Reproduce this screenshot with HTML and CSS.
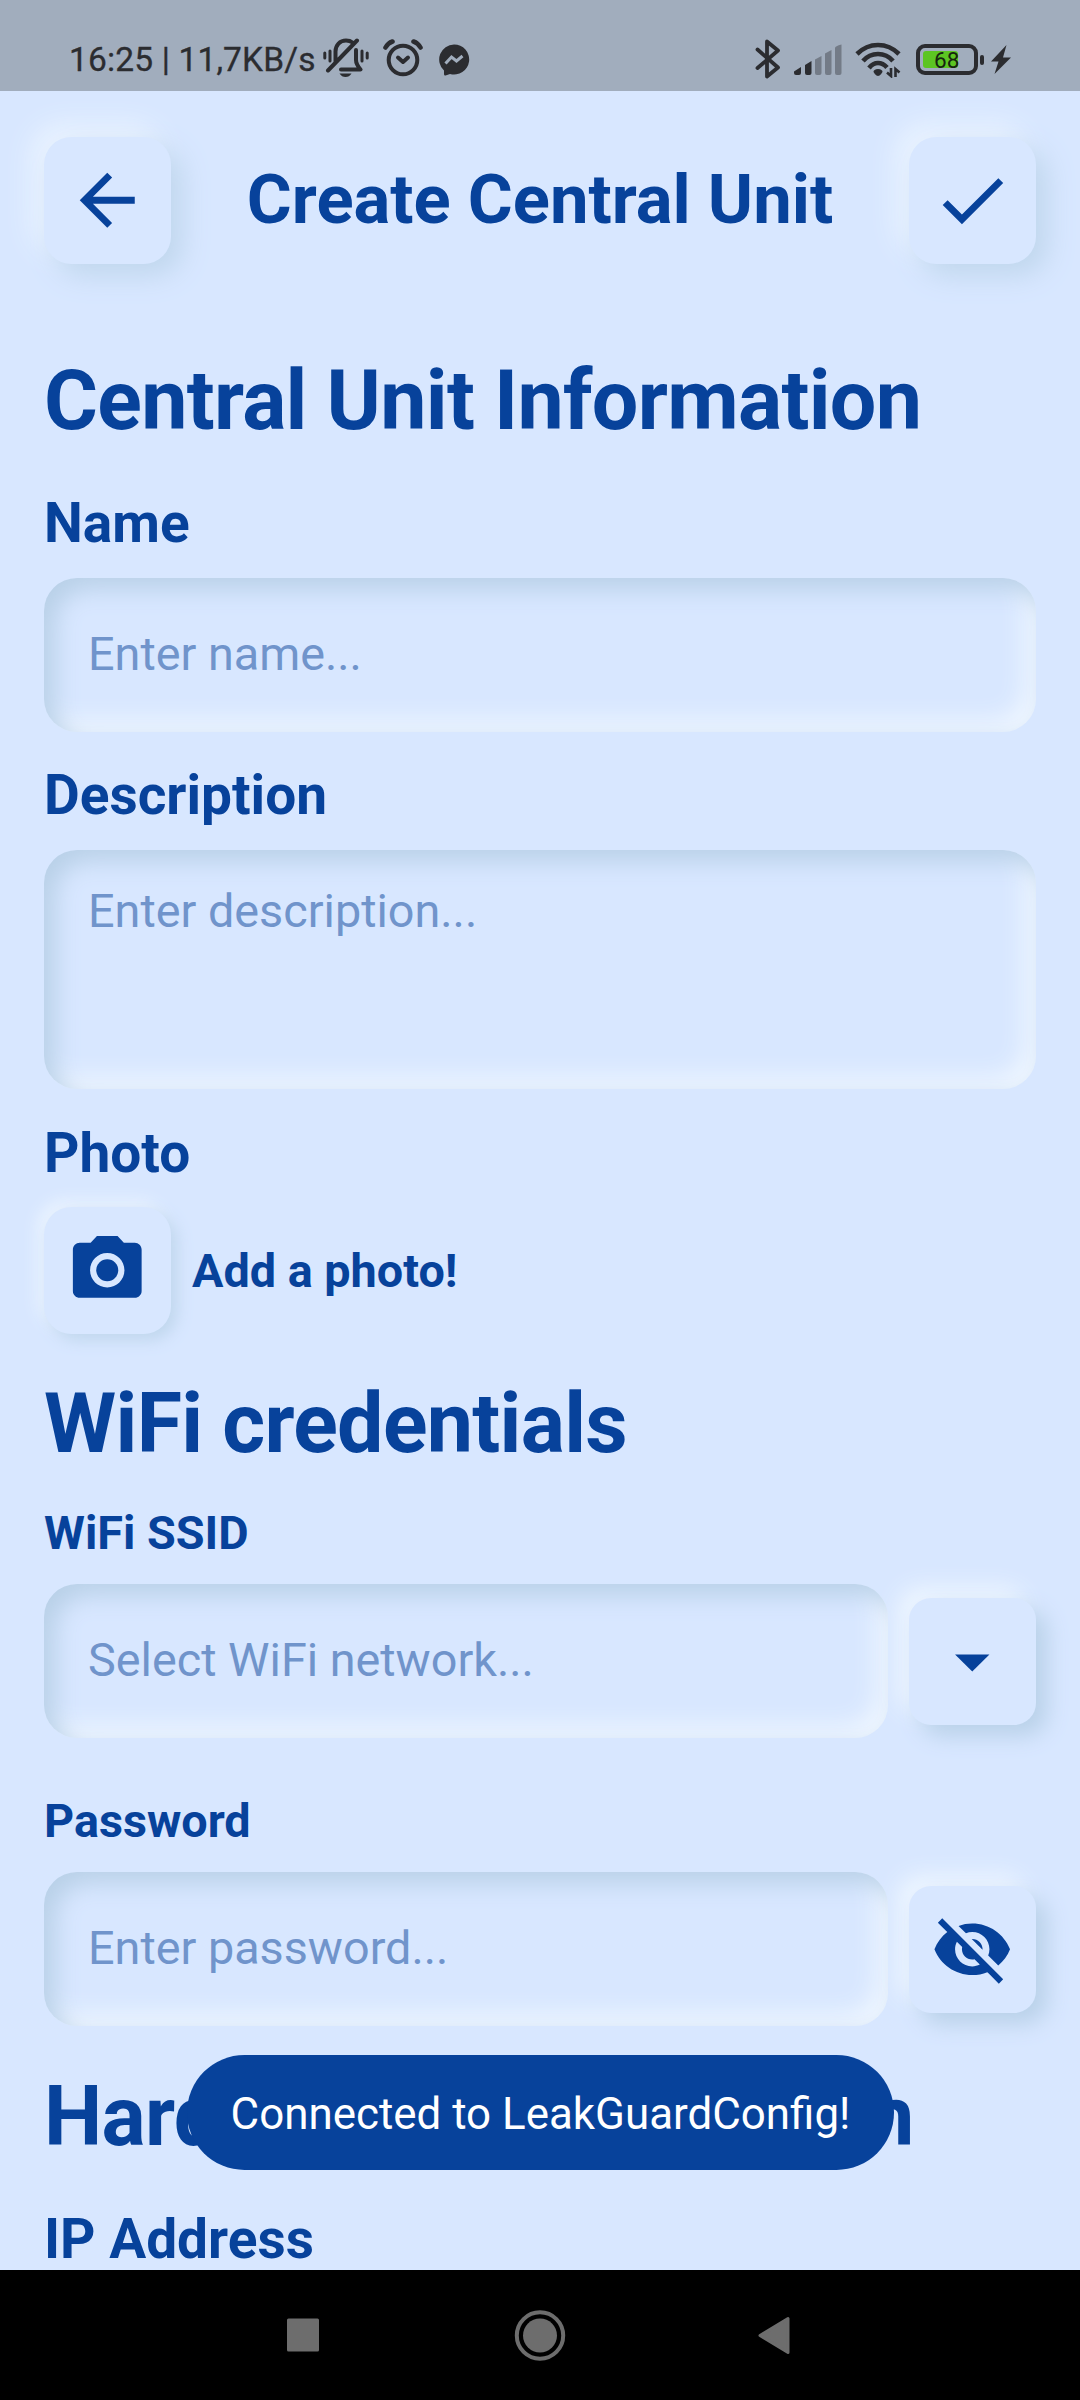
FILE: index.html
```html
<!DOCTYPE html>
<html lang="en">
<head>
<meta charset="utf-8">
<title>Create Central Unit</title>
<link rel="stylesheet" href="styles.css">
</head>
<body>
<div class="screen">
  <div class="status">
    <span class="clock">16:25 | 11,7KB/s</span>
    <svg class="icon-muted" width="46" height="40" viewBox="0 0 46 40" fill="none" stroke="currentColor" stroke-width="4" stroke-linecap="round">
      <path d="M12.5 24V13.500C12.500 7 17 2.500 23 2.500c3 0 5 .8 6.500 2M33 12v10c0 3 1.500 6 4.500 9.500H18M5 32.500L34 2.500" stroke-linejoin="round"/>
      <path d="M16.500 35.500h12c-1.500 2.500-3.500 3.500-6 3.500s-4.500-1-6-3.500z" fill="currentColor" stroke="none"/>
      <path d="M1.800 15v5M7 13v10M39 13v10M44.200 15v5" stroke-width="3"/>
    </svg>
    <svg class="icon-alarm" width="40" height="38" viewBox="0 0 40 38" fill="none" stroke="currentColor" stroke-width="4" stroke-linecap="round">
      <circle cx="20" cy="21" r="14.300"/>
      <path d="M15 18.500l5 4.500 5-4.500" stroke-linejoin="round"/>
      <path d="M2.500 8.500Q5 4 9.500 2.500M37.500 8.500Q35 4 30.500 2.500" stroke-width="4.600"/>
    </svg>
    <svg class="icon-messenger" width="32" height="32" viewBox="0 0 32 32">
      <path d="M16 .5a15 15 0 1 1-4 29.400L7.500 31.500Q6 31.800 6 30v-3.500A15 15 0 0 1 16 .5z" fill="currentColor"/>
      <path d="M7.500 19.500l6-6.500 5 4 6-5" fill="none" stroke="#a1adbd" stroke-width="3"/>
    </svg>
    <svg class="icon-bluetooth" width="26" height="40" viewBox="0 0 26 40" fill="none" stroke="currentColor" stroke-width="3.800" stroke-linejoin="round" stroke-linecap="round">
      <path d="M2.500 10.500L23 28.500 12 37.500v-35L23 11.500 2.500 29"/>
    </svg>
    <svg class="icon-signal" width="48" height="32" viewBox="0 0 48 32" fill="currentColor">
      <path d="M0 27.500L7 23v6q0 2-2 2H2q-2 0-2-2z"/>
      <path d="M11 21L17.500 17v12q0 2-2 2h-2.500q-2 0-2-2z"/>
      <g opacity=".38">
        <path d="M21 15.500L27.500 12v17q0 2-2 2h-2.500q-2 0-2-2z"/>
        <path d="M31 9.500L37.500 6v23q0 2-2 2h-2.500q-2 0-2-2z"/>
        <path d="M41 4Q41 2 47.500.500V29q0 2-2 2h-2.500q-2 0-2-2z"/>
      </g>
    </svg>
    <svg class="icon-wifi" width="47" height="36" viewBox="0 0 47 36" fill="none" stroke="currentColor" stroke-width="4.600">
      <path d="M2 12Q11 3 23 3t21 9M8 19Q14 12 23 12t15 7M14 26Q18 21 23 21t9 4.500"/>
      <path d="M23 27c3 0 4.500 1.500 4.500 2.500S25 34 23 34s-4.500-3.500-4.500-4.500S20 27 23 27z" fill="currentColor" stroke="none"/>
      <path d="M36 26v8l-4-3.500M40.500 35v-8l4 3.500" stroke-width="2.600"/>
    </svg>
    <span class="battery"><span class="battery-level"></span><span class="battery-text">68</span></span>
    <span class="battery-nub"></span>
    <svg class="icon-bolt" width="20" height="29" viewBox="0 0 20 29" fill="currentColor"><path d="M15.500 0L0 16.500h7.500L3.500 29 20 12.500h-8z"/></svg>
  </div>

  <header class="header">
    <button class="btn btn-soft">
      <svg width="82.5" height="82.5" viewBox="0 0 24 24" fill="currentColor"><path d="M20 11H7.830l5.590-5.590L12 4l-8 8 8 8 1.410-1.410L7.830 13H20v-2z"/></svg>
    </button>
    <h1 class="title">Create Central Unit</h1>
    <button class="btn btn-soft">
      <svg width="82.5" height="82.5" viewBox="0 0 24 24" fill="currentColor"><path d="M9 16.170L4.830 12l-1.420 1.410L9 19 21 7l-1.410-1.410z"/></svg>
    </button>
  </header>

  <main class="form">
    <section class="section">
      <h2 class="heading">Central Unit Information</h2>
      <div class="field">
        <span class="label">Name</span>
        <div class="input">Enter name...</div>
      </div>
      <div class="field">
        <span class="label">Description</span>
        <div class="input input-area">Enter description...</div>
      </div>
      <div class="field field-photo">
        <span class="label">Photo</span>
        <div class="row row-photo">
          <button class="btn btn-near">
            <svg width="82.5" height="82.5" viewBox="0 0 24 24" fill="currentColor"><circle cx="12" cy="12" r="3.200"/><path d="M9 2L7.170 4H4c-1.100 0-2 .9-2 2v12c0 1.100.9 2 2 2h16c1.100 0 2-.9 2-2V6c0-1.100-.9-2-2-2h-3.170L15 2H9zm3 15c-2.760 0-5-2.240-5-5s2.240-5 5-5 5 2.240 5 5-2.240 5-5 5z"/></svg>
          </button>
          <span class="small-label">Add a photo!</span>
        </div>
      </div>
    </section>

    <section class="section">
      <h2 class="heading">WiFi credentials</h2>
      <div class="field field-wifi">
        <span class="small-label">WiFi SSID</span>
        <div class="row">
          <div class="input">Select WiFi network...</div>
          <button class="btn btn-sharp">
            <svg width="82.5" height="82.5" viewBox="0 0 24 24" fill="currentColor"><path d="M7 10l5 5 5-5z"/></svg>
          </button>
        </div>
      </div>
      <div class="field field-wifi">
        <span class="small-label">Password</span>
        <div class="row">
          <div class="input">Enter password...</div>
          <button class="btn btn-sharp">
            <svg width="82.5" height="82.5" viewBox="0 0 24 24" fill="currentColor"><path d="M12 7c2.760 0 5 2.240 5 5 0 .65-.13 1.260-.36 1.830l2.920 2.920c1.510-1.260 2.700-2.890 3.430-4.750-1.730-4.390-6-7.500-11-7.500-1.400 0-2.740.25-3.980.7l2.160 2.160C10.740 7.130 11.350 7 12 7zM2 4.270l2.280 2.280.46.46C3.080 8.300 1.780 10.020 1 12c1.730 4.390 6 7.500 11 7.500 1.550 0 3.030-.3 4.380-.84l.42.42L19.730 22 21 20.730 3.270 3 2 4.270zM7.530 9.800l1.550 1.550c-.05.21-.08.43-.08.65 0 1.660 1.340 3 3 3 .22 0 .44-.03.65-.08l1.550 1.550c-.67.33-1.410.53-2.200.53-2.760 0-5-2.240-5-5 0-.79.2-1.530.53-2.200zm4.310-.78l3.150 3.150.02-.16c0-1.660-1.340-3-3-3l-.17.010z"/></svg>
          </button>
        </div>
      </div>
    </section>

    <section class="section">
      <h2 class="heading">Hardware Configuration</h2>
      <div class="field">
        <span class="label">IP Address</span>
      </div>
    </section>
  </main>

  <div class="toast">Connected to LeakGuardConfig!</div>

  <nav class="navbar">
    <svg width="54" height="54" viewBox="0 0 54 54"><rect x="11" y="10.500" width="32" height="33" rx="1.500" fill="#6d6d6d"/></svg>
    <svg width="54" height="54" viewBox="0 0 54 54"><circle cx="27" cy="27.500" r="23.200" fill="none" stroke="#6d6d6d" stroke-width="4"/><circle cx="27" cy="27.500" r="17" fill="#6d6d6d"/></svg>
    <svg width="54" height="54" viewBox="0 0 54 54"><path d="M11 27.500L39 10.500v34z" fill="#6d6d6d" stroke="#6d6d6d" stroke-width="3" stroke-linejoin="round"/></svg>
  </nav>
</div>
</body>
</html>
```
FILE: styles.css
```css
* { box-sizing: border-box; }

body {
  margin: 0;
  font-family: Roboto, sans-serif;
  background: #d8e7ff;
}

.screen {
  position: relative;
  display: flex;
  flex-direction: column;
  width: 1080px;
  height: 2400px;
  overflow: hidden;
  background: #d8e7ff;
  color: #07429b;
}

svg { display: block; flex: none; }

/* Status bar */
.status {
  flex: none;
  display: flex;
  align-items: center;
  height: 91px;
  padding: 28px 69px 0 69px;
  background: #a1adbd;
  color: #2b2c30;
}

.clock {
  width: 254px;
  padding-top: 1px;
  font-size: 33.500px;
  font-weight: 400;
  line-height: 40px;
  letter-spacing: 0.15px;
  white-space: nowrap;
  -webkit-text-stroke: 0.3px #2b2c30;
}

.icon-muted { margin-top: -3px; }
.icon-alarm { margin: -4px 0 0 14px; }
.icon-messenger { margin-left: 15px; }
.icon-bluetooth { margin-left: auto; margin-right: 13px; margin-top: -2px; }
.icon-signal { margin-top: 0; margin-right: 13px; }
.icon-wifi { margin-right: 14px; }

.battery {
  display: flex;
  position: relative;
  width: 62px;
  height: 31px;
  padding: 3px;
  border: 4px solid #2b2c30;
  border-radius: 9px;
}

.battery-level {
  width: 35px;
  border-radius: 3px;
  background: #5cc522;
}

.battery-text {
  position: absolute;
  inset: 0;
  padding-left: 14px;
  font-size: 22.500px;
  font-weight: 400;
  line-height: 24px;
  color: #16240f;
}

.battery-nub {
  width: 4px;
  height: 10px;
  margin-left: 2px;
  border-radius: 2px;
  background: #2b2c30;
}

.icon-bolt { margin-left: 7px; }

/* Header */
.header {
  flex: none;
  display: flex;
  align-items: center;
  justify-content: space-between;
  padding: 46px 44px 0;
}

.title {
  margin: 0;
  padding-bottom: 2px;
  font-size: 68.750px;
  font-weight: 700;
  line-height: 80px;
  white-space: nowrap;
}

/* Buttons */
.btn {
  flex: none;
  display: flex;
  align-items: center;
  justify-content: center;
  width: 127px;
  height: 127px;
  padding: 0;
  border: 0;
  border-radius: 27.500px;
  background: #d8e7ff;
  color: inherit;
}

.btn-soft { box-shadow: 11px 11px 28px #bfd6ed, -11px -11px 28px #edf5ff; }
.btn-near { box-shadow: 6px 6px 16px #bfd6ed, -6px -6px 16px #edf5ff; }
.btn-sharp {
  border-radius: 22px;
  box-shadow: 11px 11px 22px #b9d1e9, -11px -11px 22px #eef6ff;
}

/* Form */
.form {
  flex: 1 1 0;
  min-height: 0;
  overflow: hidden;
  padding: 89px 44px 0;
}

.section + .section { margin-top: 42px; }

.heading {
  margin: 0 0 42px;
  font-size: 82.500px;
  font-weight: 700;
  line-height: 96px;
  letter-spacing: -0.6875px;
  white-space: nowrap;
}

.section + .section .heading { margin-bottom: 35px; }
.section + .section:last-child { margin-top: 43px; }
.section:last-child .heading { margin-bottom: 42px; }

.field {
  display: flex;
  flex-direction: column;
  gap: 23px;
}

.field + .field { margin-top: 31px; }
.field + .field-photo { margin-top: 32px; gap: 22px; }
.field-wifi { gap: 25px; }
.field-wifi + .field-wifi { margin-top: 57px; }

.label {
  font-size: 55px;
  font-weight: 700;
  line-height: 64px;
}

.small-label {
  font-size: 46.750px;
  font-weight: 700;
  line-height: 52px;
}

.row {
  display: flex;
  align-items: center;
  gap: 21px;
}

.input {
  flex: 1;
  height: 154px;
  flex-basis: 154px;
  padding: 50px 44px;
  border-radius: 33px;
  box-shadow: inset 11px 11px 24px #b8d0e8, inset -11px -11px 24px #f0f7ff;
  font-size: 46.750px;
  line-height: 52px;
  color: #7094cb;
  white-space: nowrap;
}

.input-area {
  height: 239px;
  flex-basis: 239px;
  padding-top: 35px;
}

/* Toast */
.toast {
  position: absolute;
  left: 187px;
  top: 2055px;
  width: 707px;
  height: 115px;
  border-radius: 57.500px;
  background: #07429b;
  color: #fff;
  font-size: 43.900px;
  line-height: 119px;
  text-align: center;
  white-space: nowrap;
}

/* Navigation bar */
.navbar {
  flex: none;
  display: flex;
  align-items: center;
  justify-content: space-between;
  height: 130px;
  padding: 0 277px 0 276px;
  background: #000;
}
```
